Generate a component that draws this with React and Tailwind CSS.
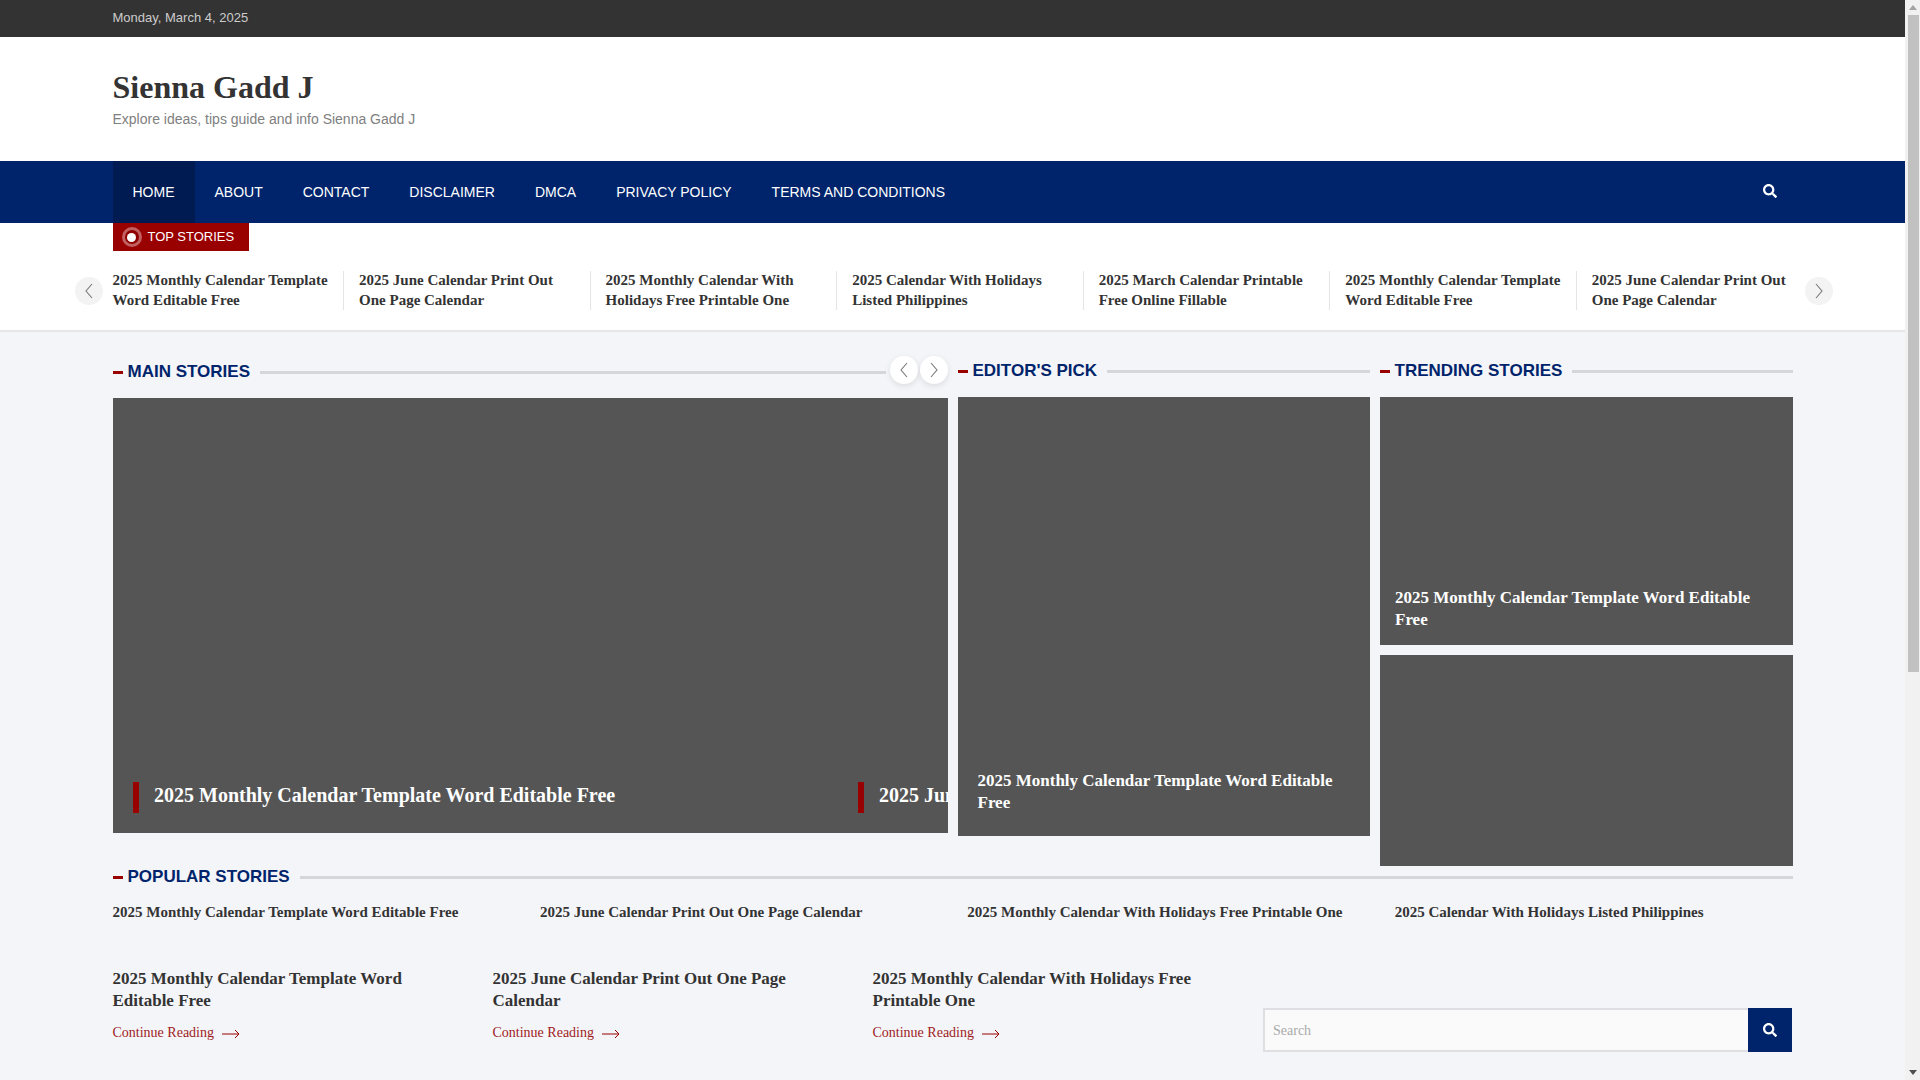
import React from "react";
import { FaSearch } from "react-icons/fa";

const serif = "font-['Liberation_Serif',serif]";

const tickerItems = [
  "2025 Monthly Calendar Template Word Editable Free",
  "2025 June Calendar Print Out One Page Calendar",
  "2025 Monthly Calendar With Holidays Free Printable One",
  "2025 Calendar With Holidays Listed Philippines",
  "2025 March Calendar Printable Free Online Fillable",
  "2025 Monthly Calendar Template Word Editable Free",
  "2025 June Calendar Print Out One Page Calendar",
];

const navItems = ["Home", "About", "Contact", "Disclaimer", "DMCA", "Privacy Policy", "Terms and Conditions"];

const popular = [
  "2025 Monthly Calendar Template Word Editable Free",
  "2025 June Calendar Print Out One Page Calendar",
  "2025 Monthly Calendar With Holidays Free Printable One",
  "2025 Calendar With Holidays Listed Philippines",
];

const articles = popular.slice(0, 3);

function Chevron({ dir }) {
  return (
    <svg width="10" height="16" viewBox="0 0 10 16" fill="none" stroke="#777" strokeWidth="1.1">
      {dir === "left" ? <path d="M8 1 L2 8 L8 15" /> : <path d="M2 1 L8 8 L2 15" />}
    </svg>
  );
}

function Heading({ title, className = "", children }) {
  return (
    <div className={`flex items-center h-[24px] ${className}`}>
      <span className="w-[10px] h-[3px] bg-[#990000] mr-[5px] flex-none" />
      <h2 className="text-[17px] font-bold text-[#00246b] uppercase whitespace-nowrap">{title}</h2>
      <span className="flex-1 h-[3px] bg-[#d5d6d9] ml-[10px]" />
      {children}
    </div>
  );
}

function Scrollbar() {
  return (
    <div className="w-[15px] h-[1080px] bg-[#f1f1f1] flex-none flex flex-col items-center pl-[1px]">
      <div className="h-[15px] flex items-center justify-center">
        <span className="w-0 h-0 border-x-[4px] border-x-transparent border-b-[5px] border-b-[#a3a3a3]" />
      </div>
      <div className="w-[11px] h-[657px] bg-[#c1c1c1]" />
      <div className="flex-1" />
      <div className="h-[15px] flex items-center justify-center">
        <span className="w-0 h-0 border-x-[4px] border-x-transparent border-t-[5px] border-t-[#505050]" />
      </div>
    </div>
  );
}

export default function App() {
  return (
    <div className="flex w-[1920px] h-[1080px] overflow-hidden font-['Liberation_Sans',Arial,sans-serif]">
      <div className="w-[1905px] h-[1080px] flex-none bg-[#f4f5f9] overflow-hidden">
        {/* top bar */}
        <div className="h-[37px] bg-[#333333] px-[112.5px] flex items-center pb-[2px]">
          <span className="text-[13px] text-[#cccccc]">Monday, March 4, 2025</span>
        </div>

        {/* branding */}
        <div className="h-[124px] bg-white px-[112.5px] pt-[29px]">
          <h1 className={`${serif} text-[32px] leading-[42px] font-bold text-[#333333]`}>Sienna Gadd J</h1>
          <p className="text-[14px] leading-[20px] mt-[1px] text-[#808080]">Explore ideas, tips guide and info Sienna Gadd J</p>
        </div>

        {/* nav */}
        <div className="h-[62px] bg-[#00246b] px-[112.5px] flex items-center justify-between">
          <ul className="flex h-full">
            {navItems.map((item, i) => (
              <li
                key={item}
                className={`px-[20px] flex items-center text-[14px] uppercase text-white ${i === 0 ? "bg-[#001a52]" : ""}`}
              >
                {item}
              </li>
            ))}
          </ul>
          <FaSearch className="text-white w-[14px] h-[14px] mr-[16px] mb-[2px]" />
        </div>

        {/* ticker */}
        <div className="h-[109px] bg-white border-b-2 border-[#e6e6e8] relative">
          <div className="px-[112.5px]">
            <div className="w-[136px] h-[28px] bg-[#990000] flex items-center pl-[9px]">
              <span className="w-[20px] h-[20px] rounded-full border-[3px] border-[#c06060] bg-[#8f0000] flex items-center justify-center flex-none">
                <span className="w-[9px] h-[9px] rounded-full bg-white" />
              </span>
              <span className="text-[13px] text-white ml-[6px] whitespace-nowrap">TOP STORIES</span>
            </div>
            <div className="flex mt-[20px]">
              {tickerItems.map((t, i) => (
                <div
                  key={i}
                  className={`flex-none w-[231.55px] h-[39px] mr-[15px] ${i < 6 ? "border-r border-[#e5e5e5]" : ""}`}
                >
                  <a className={`${serif} block w-[218px] text-[15px] leading-[20px] font-bold text-[#333333] -mt-[1px]`}>{t}</a>
                </div>
              ))}
            </div>
          </div>
          <button className="absolute left-[75px] top-[54px] w-[28px] h-[28px] rounded-full bg-[#f3f3f3] flex items-center justify-center">
            <Chevron dir="left" />
          </button>
          <button className="absolute left-[1805px] top-[54px] w-[28px] h-[28px] rounded-full bg-[#f3f3f3] flex items-center justify-center">
            <Chevron dir="right" />
          </button>
        </div>

        <div className="px-[112.5px]">
          {/* story columns */}
          <div className="flex gap-[10px] items-start">
            <div className="w-[835px] flex-none pt-[28px]">
              <Heading title="Main Stories">
                <span className="flex gap-[2px] ml-[4px] mb-[5px]">
                  <button className="w-[28px] h-[28px] rounded-full bg-white shadow-[0_2px_6px_rgba(0,0,0,0.1)] flex items-center justify-center">
                    <Chevron dir="left" />
                  </button>
                  <button className="w-[28px] h-[28px] rounded-full bg-white shadow-[0_2px_6px_rgba(0,0,0,0.1)] flex items-center justify-center">
                    <Chevron dir="right" />
                  </button>
                </span>
              </Heading>
              <div className="h-[435px] mt-[14px] bg-[#555555] overflow-hidden flex items-end pl-[20px] pb-[20px]">
                <div className="flex-none w-[725px] h-[31px] flex">
                  <span className="w-[6px] h-full bg-[#990000]" />
                  <h3 className={`${serif} pl-[15.5px] text-[20px] leading-[26px] font-bold text-white whitespace-nowrap`}>
                    2025 Monthly Calendar Template Word Editable Free
                  </h3>
                </div>
                <div className="flex-none w-[725px] h-[31px] flex">
                  <span className="w-[6px] h-full bg-[#990000]" />
                  <h3 className={`${serif} pl-[15.5px] text-[20px] leading-[26px] font-bold text-white whitespace-nowrap`}>
                    2025 June Calendar Print Out One Page Calendar
                  </h3>
                </div>
              </div>
            </div>

            <div className="w-[412px] flex-none pt-[27px]">
              <Heading title="Editor's Pick" />
              <div className="h-[439px] mt-[14px] bg-[#555555] flex items-end pl-[20px] pr-[18px] pb-[22px]">
                <h3 className={`${serif} text-[17px] leading-[22px] font-bold text-white`}>
                  2025 Monthly Calendar Template Word Editable Free
                </h3>
              </div>
            </div>

            <div className="flex-1 pt-[27px]">
              <Heading title="Trending Stories" />
              <div className="h-[248px] mt-[14px] bg-[#555555] flex items-end pl-[15.5px] pr-[14.5px] pb-[14px]">
                <h3 className={`${serif} text-[17px] leading-[22px] font-bold text-white`}>
                  2025 Monthly Calendar Template Word Editable Free
                </h3>
              </div>
              <div className="h-[211px] mt-[10px] bg-[#555555]" />
            </div>
          </div>

          {/* popular */}
          <Heading title="Popular Stories" className="-mt-[1px]" />
          <div className="grid grid-cols-[repeat(4,427.4px)] mt-[13px]">
            {popular.map((t) => (
              <a key={t} className={`${serif} text-[15px] leading-[20px] font-bold text-[#333333] whitespace-nowrap`}>{t}</a>
            ))}
          </div>

          {/* bottom row */}
          <div className="flex mt-[46px] items-start">
            {articles.map((t) => (
              <div key={t} className="w-[380px] flex-none pr-[60px]">
                <h3 className={`${serif} text-[17px] leading-[22px] font-bold text-[#333333]`}>{t}</h3>
                <a className={`${serif} flex items-center mt-[11px] text-[14px] leading-[20px] text-[#a01c22]`}>
                  Continue Reading
                  <svg width="18" height="10" viewBox="0 0 18 10" fill="none" stroke="#990000" strokeWidth="1" className="ml-[8px] mt-[1px]">
                    <path d="M0 5 H17 M13 1 L17 5 L13 9" />
                  </svg>
                </a>
              </div>
            ))}
            <div className="flex-1 flex mt-[40px] h-[44px] ml-[10.5px] mr-[1px]">
              <div className={`${serif} flex-1 bg-[#fafafa] border-2 border-r-0 border-[#dfdfe3] pl-[8px] flex items-center text-[14px] text-[#aaaaaa]`}>
                Search
              </div>
              <button className="w-[44px] h-[44px] bg-[#00246b] flex items-center justify-center">
                <FaSearch className="text-white w-[14px] h-[14px]" />
              </button>
            </div>
          </div>
        </div>
      </div>
      <Scrollbar />
    </div>
  );
}
